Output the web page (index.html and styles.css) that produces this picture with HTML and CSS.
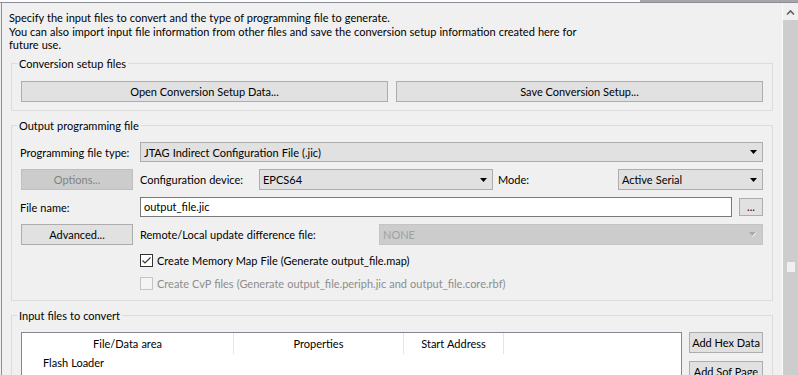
FILE: index.html
```html
<!DOCTYPE html>
<html lang="en">
<head>
    <meta charset="UTF-8">
    <title>Convert Programming File</title>
    <link rel="stylesheet" href="styles.css">
</head>
<body>
    <div class="top-edge"><div class="tab-edge"></div></div>
    <div class="frame">
        <div class="pane">
            <p class="intro">Specify the input files to convert and the type of programming file to generate.<br>You can also import input file information from other files and save the conversion setup information created here for<br>future use.</p>

            <fieldset class="group">
                <legend>Conversion setup files</legend>
                <div class="setup-buttons">
                    <button class="btn">Open Conversion Setup Data...</button>
                    <button class="btn">Save Conversion Setup...</button>
                </div>
            </fieldset>

            <fieldset class="group output-group">
                <legend>Output programming file</legend>
                <div class="output-rows">
                    <div class="row row-short">
                        <span class="lead">Programming file type:</span>
                        <div class="combo grow">
                            <span>JTAG Indirect Configuration File (.jic)</span>
                            <svg class="arrow" width="7" height="4" viewBox="0 0 7 4"><polygon points="0,0 7,0 3.5,4" fill="#000"/></svg>
                        </div>
                    </div>
                    <div class="row row-tall">
                        <button class="btn lead disabled">Options...</button>
                        <span class="label device-label">Configuration device:</span>
                        <div class="combo device-combo">
                            <span>EPCS64</span>
                            <svg class="arrow" width="7" height="4" viewBox="0 0 7 4"><polygon points="0,0 7,0 3.5,4" fill="#000"/></svg>
                        </div>
                        <span class="label mode-label">Mode:</span>
                        <div class="combo grow">
                            <span>Active Serial</span>
                            <svg class="arrow" width="7" height="4" viewBox="0 0 7 4"><polygon points="0,0 7,0 3.5,4" fill="#000"/></svg>
                        </div>
                    </div>
                    <div class="row row-short">
                        <span class="lead">File name:</span>
                        <div class="text-input grow">output_file.jic</div>
                        <button class="btn browse-btn">...</button>
                    </div>
                    <div class="row row-tall">
                        <button class="btn lead">Advanced...</button>
                        <span class="label remote-label">Remote/Local update difference file:</span>
                        <div class="combo grow disabled">
                            <span>NONE</span>
                            <svg class="arrow" width="8" height="5" viewBox="0 0 8 5"><polygon points="0,0 7,0 3.5,4" fill="#a8a8a8"/><polyline points="7,0.5 3.5,4.5" stroke="#fff" fill="none"/></svg>
                        </div>
                    </div>
                    <label class="check-row">
                        <span class="checkbox checked">
                            <svg width="11" height="11" viewBox="0 0 11 11"><polyline points="1.5,5.5 4,8 9.5,2.5" fill="none" stroke="#333" stroke-width="1.1"/></svg>
                        </span>
                        Create Memory Map File (Generate output_file.map)
                    </label>
                    <label class="check-row disabled-text">
                        <span class="checkbox off"></span>
                        Create CvP files (Generate output_file.periph.jic and output_file.core.rbf)
                    </label>
                </div>
            </fieldset>

            <fieldset class="group">
                <legend>Input files to convert</legend>
                <div class="input-area">
                    <div class="file-table">
                        <div class="table-head">
                            <span class="col col-file">File/Data area</span>
                            <span class="col col-props">Properties</span>
                            <span class="col col-addr">Start Address</span>
                        </div>
                        <div class="table-row">Flash Loader</div>
                    </div>
                    <div class="side-buttons">
                        <button class="btn side-btn">Add Hex Data</button>
                        <button class="btn side-btn">Add Sof Page</button>
                    </div>
                </div>
            </fieldset>
        </div>
        <div class="scrollbar">
            <div class="scroll-up">
                <svg width="15" height="17" viewBox="0 0 15 17"><polyline points="4,11.5 7.5,8 11,11.5" fill="none" stroke="#606060" stroke-width="1.6"/></svg>
            </div>
            <div class="scroll-track"><div class="scroll-thumb"></div></div>
        </div>
    </div>
</body>
</html>
```

FILE: styles.css
```css
html, body {
    margin: 0;
    padding: 0;
    background-color: #f0f0f0;
    font-family: Lato, "Liberation Sans", sans-serif;
    font-size: 11px;
    color: #000;
    word-spacing: 0.25px;
    overflow: hidden;
}
.top-edge {
    height: 2px;
    background-color: #fcfcfc;
    display: flex;
}
.tab-edge {
    margin-left: 640px;
    flex: 1;
    background-color: #a6a6a6;
}
.frame {
    display: flex;
    height: 372px;
    border-top: 1px solid #8a8e96;
    overflow: hidden;
}
.pane {
    flex: 1;
    margin-left: 1px;
    border-left: 1px solid #8a8e96;
}
.intro {
    margin: 0;
    padding: 8px 0 0 7px;
    line-height: 13.5px;
    height: 45px;
    white-space: nowrap;
}
.group {
    margin: 0 9px;
    padding: 0;
    border: 1px solid #dcdcdc;
    min-width: 0;
}
.group + .group {
    margin-top: 7px;
}
.group legend {
    margin-left: 5px;
    padding: 0 2px;
    line-height: 15px;
    height: 15px;
}
.btn {
    font: inherit;
    color: #000;
    background-color: #e1e1e1;
    border: 1px solid #adadad;
    border-radius: 0;
    padding: 0;
    margin: 0;
    height: 21px;
    white-space: nowrap;
}
.btn.disabled {
    background-color: #cccccc;
    border-color: #bfbfbf;
    color: #838383;
}
.setup-buttons {
    display: flex;
    gap: 8px;
    padding: 10px 9px 8px;
}
.setup-buttons .btn {
    flex: 1;
}
.output-rows {
    padding: 9px 9px 10px;
}
.row {
    display: flex;
    align-items: center;
    margin-bottom: 7px;
    white-space: nowrap;
}
.row-short {
    height: 20px;
}
.row-tall {
    height: 21px;
}
.lead {
    flex: none;
    width: 112px;
    margin-right: 7px;
}
span.lead {
    margin-left: -1px;
    width: 113px;
}
.grow {
    flex: 1;
}
.label {
    flex: none;
}
.device-label {
    width: 119px;
}
.mode-label {
    margin-left: 5px;
    width: 120px;
}
.remote-label {
    width: 239px;
}
.combo {
    height: 100%;
    box-sizing: border-box;
    display: flex;
    align-items: center;
    justify-content: space-between;
    background-color: #e1e1e1;
    border: 1px solid #adadad;
    padding: 0 5px 0 3px;
}
.row-tall .combo span {
    margin-top: -1px;
}
.combo .arrow {
    flex: none;
}
.device-combo {
    flex: none;
    width: 234px;
}
.combo.disabled {
    background-color: #cccccc;
    border-color: #c4c4c4;
    color: #a0a0a0;
}
.text-input {
    height: 100%;
    box-sizing: border-box;
    background-color: #fff;
    border: 1px solid #7a7a7a;
    padding: 0 3px;
    line-height: 18px;
    margin-right: 7px;
}
.browse-btn {
    flex: none;
    width: 24px;
    height: 18px;
    line-height: 14px;
}
.check-row {
    display: flex;
    align-items: center;
    height: 13px;
    margin: 9px 0 0 119px;
    gap: 4px;
    white-space: nowrap;
}
.check-row + .check-row {
    margin-top: 10px;
}
.checkbox {
    flex: none;
    width: 13px;
    height: 13px;
    box-sizing: border-box;
    display: flex;
    align-items: center;
    justify-content: center;
}
.checkbox.checked {
    background-color: #fff;
    border: 1px solid #333;
}
.checkbox.off {
    background-color: #f4f4f4;
    border: 1px solid #c4c4c4;
}
.disabled-text {
    color: #8d8d8d;
}
.input-area {
    display: flex;
    padding: 9px 9px 0;
    height: 120px;
}
.file-table {
    width: 661px;
    box-sizing: border-box;
    flex: none;
    background-color: #fff;
    border: 1px solid #828790;
    margin-right: 7px;
}
.table-head {
    display: flex;
    height: 21px;
}
.col {
    box-sizing: border-box;
    border-right: 1px solid #e5e5e5;
    text-align: center;
    line-height: 21px;
}
.col-file {
    width: 212px;
}
.col-props {
    width: 170px;
}
.col-addr {
    width: 100px;
}
.table-row {
    padding-left: 21px;
    line-height: 17px;
}
.side-buttons {
    display: flex;
    flex-direction: column;
    gap: 8px;
    width: 74px;
}
.side-btn {
    width: 74px;
}
.scrollbar {
    flex: none;
    width: 15px;
    border-left: 1px solid #fafafa;
    display: flex;
    flex-direction: column;
}
.scroll-up {
    height: 17px;
    background-color: #f0f0f0;
}
.scroll-up svg {
    display: block;
}
.scroll-track {
    flex: 1;
    background-color: #cdcdcd;
    padding-top: 242px;
}
.scroll-thumb {
    width: 8px;
    height: 10px;
    margin-left: 4px;
    background-color: #f0f0f0;
}
```
